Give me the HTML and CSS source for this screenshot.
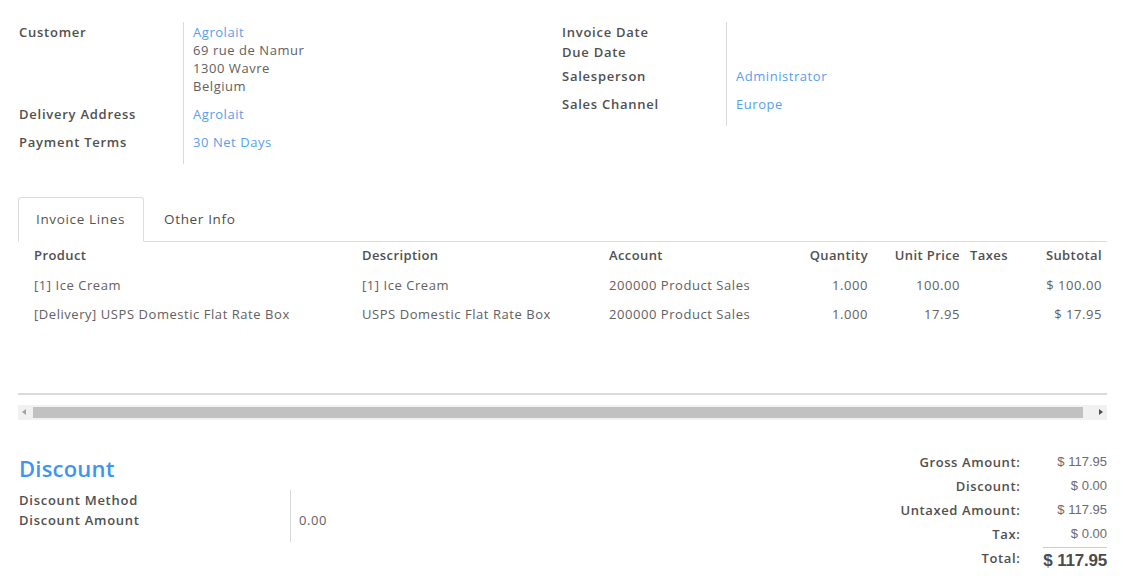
FILE: index.html
```html
<!DOCTYPE html>
<html>
<head>
<meta charset="utf-8">
<link rel="stylesheet" href="styles.css">
</head>
<body>
<div class="sheet">
  <div class="groups">
    <div class="fields fields-left">
      <div class="lbl r1">Customer</div>
      <div class="val r1"><a class="link">Agrolait</a><br>69 rue de Namur<br>1300 Wavre<br>Belgium</div>
      <div class="lbl r2">Delivery Address</div>
      <div class="val r2"><a class="link">Agrolait</a></div>
      <div class="lbl r3">Payment Terms</div>
      <div class="val r3"><a class="link">30 Net Days</a></div>
    </div>
    <div class="fields fields-right">
      <div class="lbl q1">Invoice Date</div>
      <div class="val q1"></div>
      <div class="lbl q2">Due Date</div>
      <div class="val q2"></div>
      <div class="lbl q3">Salesperson</div>
      <div class="val q3"><a class="link">Administrator</a></div>
      <div class="lbl q4">Sales Channel</div>
      <div class="val q4"><a class="link">Europe</a></div>
    </div>
  </div>

  <div class="tabs">
    <div class="tab active">Invoice Lines</div>
    <div class="tab">Other Info</div>
  </div>

  <div class="list">
    <table class="lines">
      <colgroup>
        <col class="c-prod"><col class="c-desc"><col class="c-acc"><col class="c-qty"><col class="c-price"><col class="c-tax"><col class="c-sub">
      </colgroup>
      <thead>
        <tr>
          <th class="first">Product</th>
          <th>Description</th>
          <th>Account</th>
          <th class="num">Quantity</th>
          <th class="num">Unit Price</th>
          <th>Taxes</th>
          <th class="num">Subtotal</th>
        </tr>
      </thead>
      <tbody>
        <tr>
          <td class="first">[1] Ice Cream</td>
          <td>[1] Ice Cream</td>
          <td>200000 Product Sales</td>
          <td class="num">1.000</td>
          <td class="num">100.00</td>
          <td></td>
          <td class="num">$ 100.00</td>
        </tr>
        <tr>
          <td class="first">[Delivery] USPS Domestic Flat Rate Box</td>
          <td>USPS Domestic Flat Rate Box</td>
          <td>200000 Product Sales</td>
          <td class="num">1.000</td>
          <td class="num">17.95</td>
          <td></td>
          <td class="num">$ 17.95</td>
        </tr>
      </tbody>
    </table>
  </div>

  <div class="hscroll">
    <div class="arrow arrow-left"></div>
    <div class="thumb"></div>
    <div class="arrow arrow-right"></div>
  </div>

  <div class="bottom">
    <div class="discount">
      <h2 class="disc-title">Discount</h2>
      <div class="disc-fields">
        <div class="lbl d1">Discount Method</div>
        <div class="val d1"></div>
        <div class="lbl d2">Discount Amount</div>
        <div class="val d2">0.00</div>
      </div>
    </div>
    <div class="totals">
      <div class="t-lbl">Gross Amount:</div>
      <div class="t-val">$ 117.95</div>
      <div class="t-lbl">Discount:</div>
      <div class="t-val">$ 0.00</div>
      <div class="t-lbl">Untaxed Amount:</div>
      <div class="t-val">$ 117.95</div>
      <div class="t-lbl">Tax:</div>
      <div class="t-val">$ 0.00</div>
      <div class="t-lbl t-total-lbl">Total:</div>
      <div class="t-val t-total-val">$ 117.95</div>
    </div>
  </div>
</div>
</body>
</html>
```

FILE: styles.css
```css
* { box-sizing: border-box; }

html, body {
  margin: 0;
  padding: 0;
  background: #ffffff;
}

body {
  font-family: "Open Sans", "Noto Sans", sans-serif;
  font-size: 13px;
  letter-spacing: 0.55px;
  color: #636060;
  line-height: 18px;
}

.sheet {
  width: 1123px;
  padding: 22px 16px 0 19px;
}

.link {
  color: #5a9eef;
  text-decoration: none;
}

.groups {
  display: flex;
  align-items: flex-start;
}

.fields {
  display: grid;
  width: 543px;
  grid-template-columns: 164px 1fr;
  align-content: start;
}

.lbl {
  font-weight: 600;
  color: #505050;
  letter-spacing: 0.75px;
}

.val {
  border-left: 1px solid #d9d9d9;
  padding-left: 9px;
}

.fields-left .r1 { padding-top: 1px; padding-bottom: 9px; }
.fields-left .r2 { padding-top: 1px; padding-bottom: 9px; }
.fields-left .r3 { padding-top: 1px; padding-bottom: 13px; }

.fields-right .q1 { padding-top: 1px; padding-bottom: 1px; }
.fields-right .q2 { padding-top: 1px; padding-bottom: 5px; }
.fields-right .q3 { padding-top: 1px; padding-bottom: 9px; }
.fields-right .q4 { padding-top: 1px; padding-bottom: 13px; }

/* Tabs */
.tabs {
  display: flex;
  margin-top: 33px;
  margin-left: -1px;
  border-bottom: 1px solid #dcdcdc;
  height: 45px;
}

.tab {
  height: 45px;
  padding: 0 18px 0 17px;
  line-height: 43px;
  border: 1px solid transparent;
  border-top-left-radius: 3px;
  border-top-right-radius: 3px;
  color: #4c4c4c;
  font-size: 13.5px;
  letter-spacing: 0.65px;
}

.tab.active {
  border-color: #dcdcdc;
  border-bottom-color: #ffffff;
  background: #ffffff;
  color: #555555;
}

.tab + .tab {
  padding-left: 19px;
}

/* List */
.list {
  height: 153px;
  border-bottom: 2px solid #dadada;
  margin-left: -1px;
}

.lines {
  width: 1089px;
  border-collapse: collapse;
  table-layout: fixed;
}

.c-prod { width: 339px; }
.c-desc { width: 247px; }
.c-acc { width: 196px; }
.c-qty { width: 73px; }
.c-price { width: 92px; }
.c-tax { width: 75px; }
.c-sub { width: 67px; }

.lines th {
  text-align: left;
  font-weight: 600;
  color: #505050;
  letter-spacing: 0.4px;
  padding: 4px 5px 8px 5px;
  white-space: nowrap;
}

.lines td {
  padding: 4px 5px 7px 5px;
  white-space: nowrap;
}

.lines .first {
  padding-left: 16px;
}

.lines .num {
  text-align: right;
}

/* Horizontal scrollbar */
.hscroll {
  display: flex;
  align-items: center;
  margin-top: 10px;
  margin-left: -1px;
  height: 15px;
  background: #f1f1f1;
}

.arrow {
  width: 15px;
  height: 15px;
  position: relative;
}

.arrow::after {
  content: "";
  position: absolute;
  top: 4px;
  width: 0;
  height: 0;
  border-top: 3.5px solid transparent;
  border-bottom: 3.5px solid transparent;
}

.arrow-left::after {
  left: 4px;
  border-right: 4px solid #a3a3a3;
}

.arrow-right::after {
  left: 7px;
  border-left: 4px solid #505050;
}

.thumb {
  flex: 1;
  height: 11px;
  background: #c1c1c1;
  margin-right: 9px;
}

/* Bottom */
.bottom {
  display: flex;
  justify-content: space-between;
  align-items: flex-start;
  padding-top: 30px;
}

.discount {
  width: 543px;
}

.disc-title {
  margin: 3px 0 7px 0;
  font-size: 22px;
  line-height: 30px;
  font-weight: 600;
  letter-spacing: 0.2px;
  color: #3d95f0;
}

.disc-fields {
  display: grid;
  grid-template-columns: 271px 1fr;
  line-height: 20px;
}

.disc-fields .val { padding-left: 8px; }
.disc-fields .d2 { padding-bottom: 12px; }

.totals {
  display: grid;
  grid-template-columns: auto auto;
  column-gap: 23px;
  line-height: 24px;
}

.t-lbl {
  text-align: right;
  font-weight: 600;
  color: #505050;
  letter-spacing: 0.6px;
}

.t-val {
  text-align: right;
  font-family: "Liberation Sans", Arial, sans-serif;
  font-size: 13px;
  letter-spacing: 0;
  color: #6a6a72;
  line-height: 23px;
  white-space: nowrap;
}

.t-total-lbl {
  margin-top: 1px;
  line-height: 22px;
}

.t-total-val {
  margin-top: 1px;
  border-top: 1px solid #cfcfcf;
  font-size: 17px;
  font-weight: 700;
  letter-spacing: -0.2px;
  color: #4c4c4c;
  line-height: 25px;
}
```
